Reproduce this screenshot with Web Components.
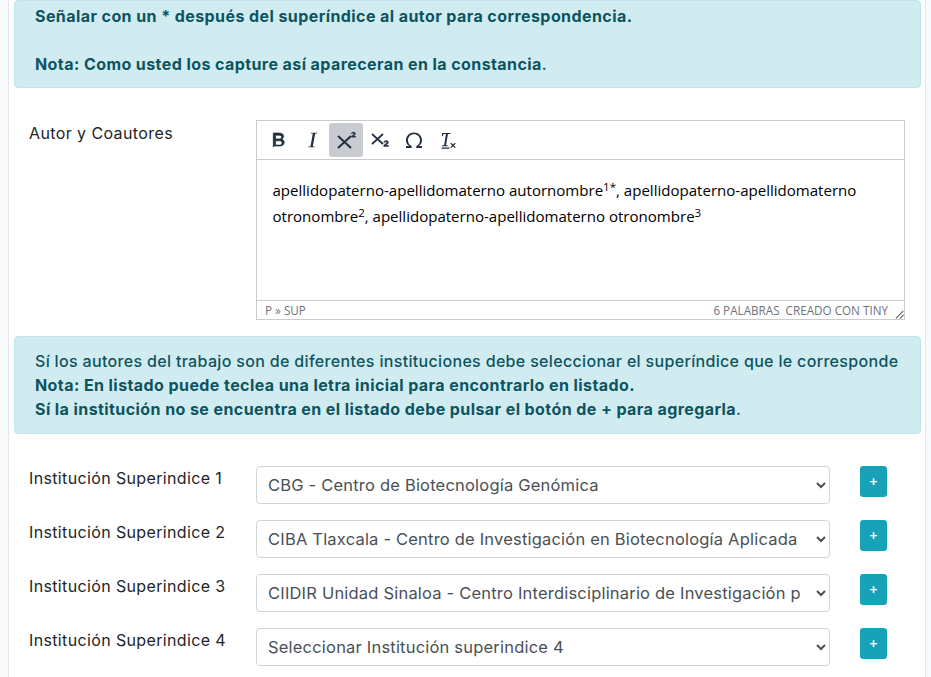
<!DOCTYPE html>
<html lang="es">
<head>
<meta charset="utf-8">
<title>Autores</title>
<style>
html, body { margin: 0; padding: 0; height: 677px; overflow: hidden; background: #f8f9fa; }
body { font-family: Inter, "Open Sans", sans-serif; color: #212529; }
</style>
</head>
<body>
<form-card>
  <info-alert style="--pad-top:3px;--pad-bottom:13px;--lh:24px;height:88px">
    <b>Señalar con un * después del superíndice al autor para correspondencia.</b><br><br>
    <b>Nota: Como usted los capture así apareceran en la constancia</b>.
  </info-alert>
  <form-row label="Autor y Coautores" style="margin-top:32px;--label-top:1px">
    <rich-editor></rich-editor>
  </form-row>
  <info-alert style="margin-top:16px;--pad-top:12px;--pad-bottom:12px;--lh:24px">
    Sí los autores del trabajo son de diferentes instituciones debe seleccionar el superíndice que le corresponde<br>
    <b>Nota: En listado puede teclea una letra inicial para encontrarlo en listado.</b><br>
    <b>Sí la institución no se encuentra en el listado debe pulsar el botón de + para agregarla</b>.
  </info-alert>
  <div style="display:flex;flex-direction:column;gap:16px;margin-top:32px">
    <inst-row label="Institución Superindice 1" value="CBG - Centro de Biotecnología Genómica"></inst-row>
    <inst-row label="Institución Superindice 2" value="CIBA Tlaxcala - Centro de Investigación en Biotecnología Aplicada"></inst-row>
    <inst-row label="Institución Superindice 3" value="CIIDIR Unidad Sinaloa - Centro Interdisciplinario de Investigación para el Desarrollo"></inst-row>
    <inst-row label="Institución Superindice 4" value="Seleccionar Institución superindice 4"></inst-row>
  </div>
</form-card>
<script>
const FONT = 'Inter, "Open Sans", sans-serif';

class FormCard extends HTMLElement {
    constructor() {
        super();
        this.attachShadow({ mode: 'open' });
        this.shadowRoot.innerHTML = `<style>
            :host { display: block; box-sizing: border-box; width: 918px; height: 677px; margin-left: 8px; padding: 0 4px 0 5px; background: #fff; border-left: 1px solid #e3e6ea; border-right: 1px solid #e3e6ea; }
        </style><slot></slot>`;
    }
}

class InfoAlert extends HTMLElement {
    constructor() {
        super();
        this.attachShadow({ mode: 'open' });
        this.shadowRoot.innerHTML = `<style>
            :host { display: block; box-sizing: border-box; padding: var(--pad-top) 20px var(--pad-bottom); background: #d1ecf1; border: 1px solid #bee5eb; border-radius: 4px; color: #0c5460; font: 500 16px/var(--lh) ${FONT}; letter-spacing: .33px; }
            ::slotted(b) { font-weight: 700; letter-spacing: .42px; }
        </style><slot></slot>`;
    }
}

class FormRow extends HTMLElement {
    constructor() {
        super();
        this.attachShadow({ mode: 'open' });
        this.shadowRoot.innerHTML = `<style>
            :host { display: flex; align-items: flex-start; }
            .label { box-sizing: border-box; width: 242px; padding: 0 0 0 15px; font: 400 16px/24px ${FONT}; letter-spacing: .4px; color: #212529; margin-top: var(--label-top, 0); }
        </style><div class="label"></div><slot></slot>`;
        this.shadowRoot.querySelector('.label').textContent = this.getAttribute('label');
    }
}

class RichEditor extends HTMLElement {
    constructor() {
        super();
        this.attachShadow({ mode: 'open' });
        this.shadowRoot.innerHTML = `<style>
            :host { display: flex; flex-direction: column; box-sizing: border-box; width: 649px; height: 200px; border: 1px solid #ccc; background: #fff; }
            .bar { display: flex; align-items: center; height: 38px; padding-left: 4px; border-bottom: 1px solid #ccc; }
            .btn { width: 34px; height: 34px; display: flex; align-items: center; justify-content: center; border-radius: 3px; }
            .btn.on { background: #c8cbcf; }
            .btn svg { width: 24px; height: 24px; fill: #222f3e; }
            .btn svg .st { fill: none; stroke: #222f3e; stroke-width: 2; }
            .body { flex: 1; padding: 17px 16px 0 15.500px; font: 400 15.050px/26px "Open Sans", sans-serif; color: #000; }
            sup { font-size: 11.500px; line-height: 0; vertical-align: 5px; }
            .status { display: flex; align-items: center; height: 18px; padding: 0 0 0 8px; border-top: 1px solid #ccc; font: 400 11.700px/21px "Open Sans", sans-serif; color: #6d737b; }
            .status .sp { flex: 1; }
            .status .c { margin-left: 6px; }
            .status svg { width: 10px; height: 10px; margin-left: 6px; margin-top: 7px; fill: #555; }
        </style>
        <div class="bar">
            <div class="btn"><svg viewBox="0 0 24 24"><path stroke="#222f3e" stroke-width=".7" d="M7.300 19V5h5.900c1.400 0 2.500.3 3.300.9.800.6 1.100 1.500 1.100 2.500 0 .7-.2 1.200-.5 1.700-.4.500-.9.800-1.500 1 .8.2 1.400.5 1.900 1.100.4.500.7 1.200.7 2 0 1.200-.4 2.100-1.200 2.800-.8.600-1.900 1-3.400 1H7.300zm2.300-6.200v4.300h3.900c.8 0 1.400-.2 1.800-.6.400-.4.700-.9.700-1.500 0-1.400-.8-2.100-2.300-2.200H9.600zm0-1.800h3.600c.7 0 1.300-.2 1.700-.5.400-.3.600-.8.600-1.400 0-.6-.2-1.100-.6-1.400-.4-.3-1-.5-1.800-.5H9.600V11z"/></svg></div>
            <div class="btn"><svg viewBox="0 0 24 24"><path d="M17.300 4.700l-.1.900h-2l-2.400 12.800h2l-.2.900H8.300l.2-.9h2l2.300-12.800h-2l.2-.9h6.300z"/></svg></div>
            <div class="btn on"><svg viewBox="0 0 24 24"><path class="st" d="M4 8l13 12M17 8L4 20"/><path stroke="#222f3e" stroke-width=".4" d="M17.300 5.300c.2-.4.500-.7.900-.9.400-.2.800-.3 1.300-.3.600 0 1 .1 1.400.4.300.3.500.7.500 1.100 0 .4-.1.800-.4 1.100-.2.300-.6.600-1.100.9l-.7.500h2.300v1.100h-4.100v-1l1.600-1.300c.4-.3.700-.6.800-.8.100-.2.200-.3.200-.5 0-.4-.2-.6-.7-.6-.3 0-.5.100-.7.300-.2.200-.4.400-.6.700l-.7-.6z"/></svg></div>
            <div class="btn"><svg viewBox="0 0 24 24"><path class="st" d="M4 6l11 10M15 6L4 16" style="stroke-width:1.700"/><path stroke="#222f3e" stroke-width=".4" transform="translate(-2.500 -2.500) scale(1.150)" d="M15.800 14.300c.2-.4.500-.7.900-.9.400-.2.800-.3 1.300-.3.600 0 1 .1 1.400.4.300.3.500.7.500 1.100 0 .4-.1.800-.4 1.100-.2.300-.6.600-1.100.9l-.7.500H20v1.100h-4.100v-1l1.600-1.300c.4-.3.700-.6.800-.8.100-.2.200-.3.200-.5 0-.4-.2-.6-.7-.6-.3 0-.5.100-.7.300-.2.200-.4.400-.6.700l-.7-.6z"/></svg></div>
            <div class="btn"><svg viewBox="0 0 24 24"><path d="M4 20h5.700v-2C7.200 16.900 6 14.800 6 12.400c0-3.500 2.400-6.100 6-6.100s6 2.600 6 6.100c0 2.400-1.200 4.500-3.700 5.600v2H20v-1.900h-3.300c2-1.300 3.300-3.300 3.300-5.700C20 8 16.600 4.500 12 4.500S4 8 4 12.400c0 2.400 1.300 4.400 3.300 5.700H4V20z"/></svg></div>
            <div class="btn"><svg viewBox="0 0 24 24"><path d="M5.500 19.500h8v1.300h-8v-1.300zm9-14.500l-.1 1H12L10 17.300h1.800l-.2 1H6l.2-1h1.900L10 6H7.500l-.8 2.200h-.9L6.100 5h8.400zM14.300 15.600l.9-.9 1.800 1.800 1.800-1.800.9.900-1.800 1.800 1.800 1.800-.9.900-1.800-1.800-1.800 1.800-.9-.9 1.800-1.800-1.800-1.800z"/></svg></div>
        </div>
        <div class="body">apellidopaterno-apellidomaterno autornombre<sup>1*</sup>, apellidopaterno-apellidomaterno otronombre<sup>2</sup>, apellidopaterno-apellidomaterno otronombre<sup>3</sup></div>
        <div class="status"><span>P » SUP</span><span class="sp"></span><span>6 PALABRAS</span><span class="c">CREADO CON TINY</span><svg viewBox="0 0 10 10"><path d="M9 1.500L1.500 9l.7.700L9.700 2.200 9 1.500zM9.300 5.500L5.500 9.300l.7.700 3.800-3.800-.7-.7z"/></svg></div>`;
    }
}

class InstRow extends HTMLElement {
    constructor() {
        super();
        this.attachShadow({ mode: 'open' });
        this.shadowRoot.innerHTML = `<style>
            :host { display: flex; align-items: flex-start; height: 38px; }
            .label { box-sizing: border-box; width: 242px; padding-left: 15px; font: 400 16px/24px ${FONT}; letter-spacing: .36px; color: #212529; }
            select { box-sizing: border-box; width: 574px; height: 38px; padding: 6px 12px 6px 7px; border: 1px solid #ced4da; border-radius: 4px; font: 400 16.500px/24px ${FONT}; letter-spacing: .2px; color: #495057; background: #fff; }
            .add { box-sizing: border-box; width: 27px; height: 31px; margin: 0 0 0 30px; border-radius: 3.200px; background: #17a2b8; color: #fff; font: 500 14px/30px ${FONT}; text-align: center; }
        </style>
        <div class="label"></div>
        <select><option></option></select>
        <div class="add">+</div>`;
        this.shadowRoot.querySelector('.label').textContent = this.getAttribute('label');
        this.shadowRoot.querySelector('option').textContent = this.getAttribute('value');
    }
}

customElements.define('form-card', FormCard);
customElements.define('info-alert', InfoAlert);
customElements.define('form-row', FormRow);
customElements.define('rich-editor', RichEditor);
customElements.define('inst-row', InstRow);
</script>
</body>
</html>
